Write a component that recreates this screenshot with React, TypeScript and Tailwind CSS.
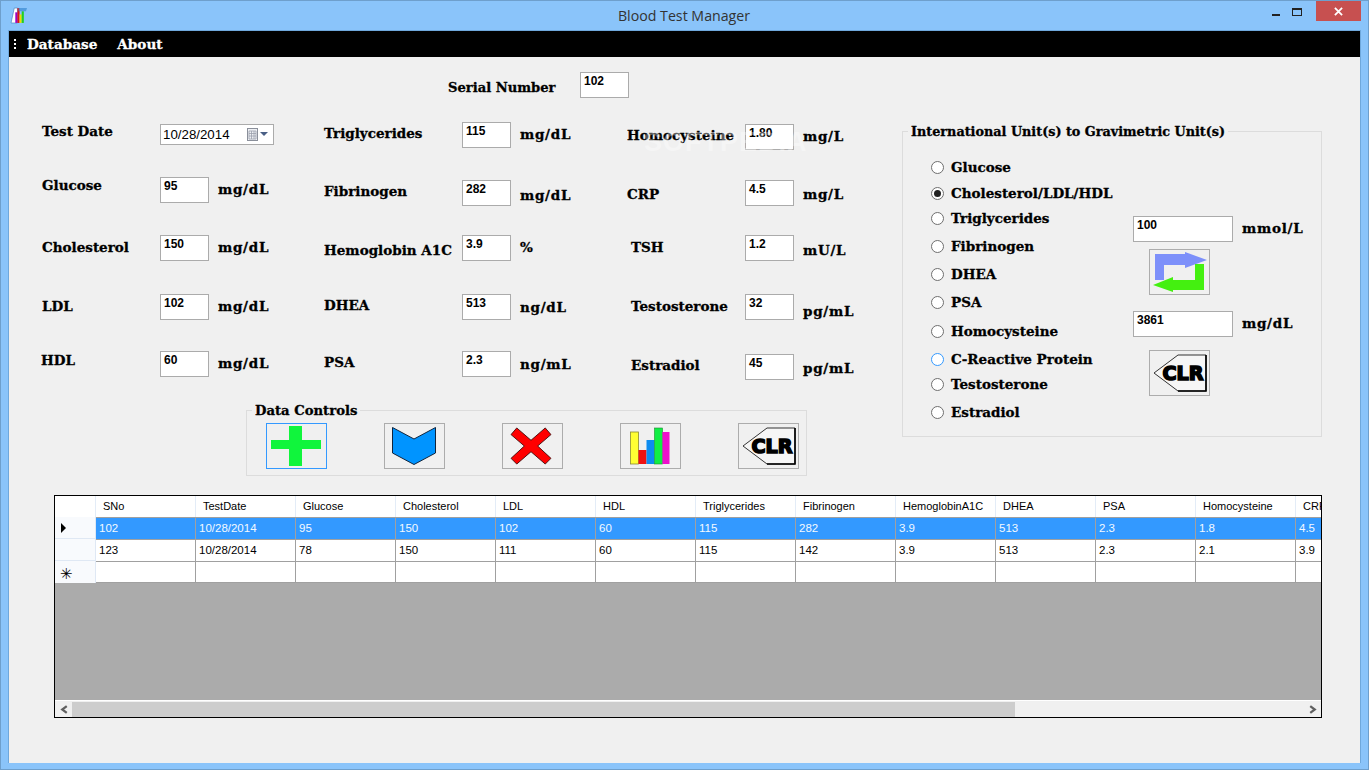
import { Fragment } from 'react'

const labelBase = "font-['DejaVu_Serif',serif] font-bold leading-[17px] text-black whitespace-nowrap [-webkit-text-stroke:0.3px_#000]"
const labelFont = `${labelBase} text-[13.5px]`
const unidadFont = "font-['DejaVu_Serif',serif] font-bold leading-4 text-black whitespace-nowrap [-webkit-text-stroke:0.3px_#000] text-[13.5px] tracking-[0.7px]"
const inputBox = "border border-[#ababab] bg-white font-['Liberation_Sans',sans-serif] font-semibold text-[12px] leading-4 text-black pl-[3px]"

type Campo = { label: string; valor: string; unidad?: string; fila: string; offLabel: string; offUnidad: string; labelX?: string }

const columna1: Campo[] = [
  { label: 'Glucose', valor: '95', unidad: 'mg/dL', fila: 'mt-[27px]', offLabel: 'mt-0', offUnidad: 'mt-[4px]' },
  { label: 'Cholesterol', valor: '150', unidad: 'mg/dL', fila: 'mt-[32px]', offLabel: 'mt-[4px]', offUnidad: 'mt-[4px]' },
  { label: 'LDL', valor: '102', unidad: 'mg/dL', fila: 'mt-[33px]', offLabel: 'mt-[4px]', offUnidad: 'mt-[4px]' },
  { label: 'HDL', valor: '60', unidad: 'mg/dL', fila: 'mt-[31px]', offLabel: 'mt-[1px]', offUnidad: 'mt-[4px]', labelX: '-ml-px' },
]

const columna2: Campo[] = [
  { label: 'Triglycerides', valor: '115', unidad: 'mg/dL', fila: 'mt-0', offLabel: 'mt-[3px]', offUnidad: 'mt-[4px]' },
  { label: 'Fibrinogen', valor: '282', unidad: 'mg/dL', fila: 'mt-[32px]', offLabel: 'mt-[3px]', offUnidad: 'mt-[7px]' },
  { label: 'Hemoglobin A1C', valor: '3.9', unidad: '%', fila: 'mt-[29px]', offLabel: 'mt-[7px]', offUnidad: 'mt-[4px]' },
  { label: 'DHEA', valor: '513', unidad: 'ng/dL', fila: 'mt-[33px]', offLabel: 'mt-[3px]', offUnidad: 'mt-[5px]' },
  { label: 'PSA', valor: '2.3', unidad: 'ng/mL', fila: 'mt-[31px]', offLabel: 'mt-[3px]', offUnidad: 'mt-[5px]' },
]

const columna3: Campo[] = [
  { label: 'Homocysteine', valor: '1.80', unidad: 'mg/L', fila: 'mt-[2px]', offLabel: 'mt-[3px]', offUnidad: 'mt-[4px]' },
  { label: 'CRP', valor: '4.5', unidad: 'mg/L', fila: 'mt-[30px]', offLabel: 'mt-[6px]', offUnidad: 'mt-[6px]' },
  { label: 'TSH', valor: '1.2', unidad: 'mU/L', fila: 'mt-[29px]', offLabel: 'mt-[4px]', offUnidad: 'mt-[7px]', labelX: 'ml-[4px]' },
  { label: 'Testosterone', valor: '32', unidad: 'pg/mL', fila: 'mt-[33px]', offLabel: 'mt-[4px]', offUnidad: 'mt-[9px]', labelX: 'ml-[4px]' },
  { label: 'Estradiol', valor: '45', unidad: 'pg/mL', fila: 'mt-[34px]', offLabel: 'mt-[3px]', offUnidad: 'mt-[6px]', labelX: 'ml-[4px]' },
]

const radios = [
  { t: 'Glucose', m: 'mt-0' },
  { t: 'Cholesterol/LDL/HDL', m: 'mt-[6px]', on: true },
  { t: 'Triglycerides', m: 'mt-[5px]' },
  { t: 'Fibrinogen', m: 'mt-[8px]' },
  { t: 'DHEA', m: 'mt-[8px]' },
  { t: 'PSA', m: 'mt-[8px]' },
  { t: 'Homocysteine', m: 'mt-[9px]' },
  { t: 'C-Reactive Protein', m: 'mt-[8px]', hover: true },
  { t: 'Testosterone', m: 'mt-[5px]' },
  { t: 'Estradiol', m: 'mt-[8px]' },
]

const columnasTabla = ['SNo', 'TestDate', 'Glucose', 'Cholesterol', 'LDL', 'HDL', 'Triglycerides', 'Fibrinogen', 'HemoglobinA1C', 'DHEA', 'PSA', 'Homocysteine', 'CRP']
const filasTabla = [
  ['102', '10/28/2014', '95', '150', '102', '60', '115', '282', '3.9', '513', '2.3', '1.8', '4.5'],
  ['123', '10/28/2014', '78', '150', '111', '60', '115', '142', '3.9', '513', '2.3', '2.1', '3.9'],
]

function Fila({ c, anchoLabel }: { c: Campo; anchoLabel: string }) {
  return (
    <div className={`flex items-start h-[26px] ${c.fila}`}>
      <div className={`${anchoLabel} shrink-0`}>
        <div className={`${labelFont} ${c.offLabel} ${c.labelX ?? ''}`}>{c.label}</div>
      </div>
      <div className={`${inputBox} w-[49px] h-[26px] shrink-0`}>{c.valor}</div>
      <div className={`${unidadFont} ml-[9px] ${c.offUnidad}`}>{c.unidad}</div>
    </div>
  )
}

function IconoClr() {
  return (
    <svg viewBox="0 0 54 38" className="w-[54px] h-[38px]">
      <path d="M25 1 H53 V37 H25 L1 19 Z" fill="#f6f6f6" stroke="#333" strokeWidth="1" />
      <path d="M53 1 V37 H25" fill="none" stroke="#000" strokeWidth="1.6" />
      <text x="30" y="26" textAnchor="middle" fontFamily="'DejaVu Sans', sans-serif" fontWeight="900" fontSize="19" stroke="#000" strokeWidth="1.6" fill="#000" textLength="41" lengthAdjust="spacingAndGlyphs">CLR</text>
    </svg>
  )
}

function Boton({ foco, children }: { foco?: boolean; children: React.ReactNode }) {
  return (
    <div className={`w-[61px] h-[46px] shrink-0 border bg-[#f0f0f0] flex items-center justify-center ${foco ? 'border-[#3399ff]' : 'border-[#acacac]'}`}>
      {children}
    </div>
  )
}

export default function App() {
  return (
    <div className="w-[1369px] h-[770px] bg-[#8ac4fa] border border-[#6e9fcc] flex flex-col overflow-hidden relative">
      {/* barra de titulo */}
      <div className="h-[29px] flex items-center shrink-0 relative">
        <svg viewBox="0 0 16 16" className="w-[17px] h-[17px] ml-[9px]">
          <path d="M4 1 L1 15 L7 15 L7 1 Z" fill="#fff" stroke="#2a6bb0" strokeWidth="0.5" />
          <rect x="5" y="5" width="2" height="10" fill="#a000c0" />
          <rect x="7" y="1" width="2" height="14" fill="#e01010" />
          <rect x="9" y="7" width="2" height="8" fill="#f0e000" />
          <rect x="11" y="4" width="2" height="11" fill="#20d020" />
          <path d="M8 1 H16 L15 4 H8 Z" fill="#3a8ad0" opacity="0.7" />
        </svg>
        <div className="flex-1 text-center font-['Open_Sans',sans-serif] text-[14.2px] text-[#333] ml-[88px]">Blood Test Manager</div>
        <div className="flex items-start h-full self-start mr-[7px]">
          <div className="w-[45px] h-[20px] flex items-center justify-center">
            <div className="w-[8px] h-[2px] bg-[#222] mt-[7px]" />
          </div>
          <div className="w-[25px] h-[20px] flex items-center justify-center -ml-[14px] mr-[7px]">
            <div className="w-[10px] h-[8px] border border-[#222] border-t-2 mt-[1px]" />
          </div>
          <div className="w-[45px] h-[20px] bg-[#c75050] flex items-center justify-center">
            <svg viewBox="0 0 10 10" className="w-[9px] h-[9px]">
              <path d="M1 1 L9 9 M9 1 L1 9" stroke="#fff" strokeWidth="2" />
            </svg>
          </div>
        </div>
      </div>

      {/* cuerpo de la ventana */}
      <div className="mx-[7px] h-[733px] flex flex-col bg-[#f0f0f0] border-t border-l border-r border-[#6fa8dc] relative">
        <div className="h-[26px] bg-black flex items-center shrink-0 font-['DejaVu_Serif',serif] font-bold text-[13.6px] text-white [-webkit-text-stroke:0.3px_#fff]">
          <div className="w-[3px] h-[10px] ml-[5px] border-l-2 border-dotted border-white" />
          <span className="ml-[10px]">Database</span>
          <span className="ml-[20px]">About</span>
        </div>

        <div className="flex h-[438px] shrink-0">
          {/* lado izquierdo */}
          <div className="w-[893px] shrink-0">
            <div className="flex items-start mt-[15px] ml-[439px]">
              <div className={`${labelBase} text-[13.1px] w-[132px] mt-[7px]`}>Serial Number</div>
              <div className={`${inputBox} w-[49px] h-[26px]`}>102</div>
            </div>

            <div className="flex mt-[24px] ml-[33px]">
              <div className="w-[282px] shrink-0">
                <div className="flex items-start h-[26px] mt-[2px]">
                  <div className="w-[118px] shrink-0">
                    <div className={`${labelFont} -mt-[1px]`}>Test Date</div>
                  </div>
                  <div className="w-[114px] h-[21px] border border-[#ababab] bg-white flex items-center justify-between pl-[2px] pr-[5px] font-['Liberation_Sans',sans-serif] text-[13.3px] leading-[17px] pb-[1px] text-black">
                    <span>10/28/2014</span>
                    <span className="flex items-center gap-[2px]">
                      <svg viewBox="0 0 11 13" className="w-[11px] h-[13px]">
                        <rect x="0.5" y="0.5" width="10" height="12" fill="#eef0f4" stroke="#8a8f9a" />
                        <path d="M2 3 H9 V11 H2 Z M4.5 3 V11 M7 3 V11 M2 5.5 H9 M2 8 H9" fill="none" stroke="#9aa0ac" strokeWidth="0.8" />
                      </svg>
                      <span className="w-0 h-0 border-l-[4px] border-r-[4px] border-t-[4px] border-l-transparent border-r-transparent border-t-[#4a5f85] block" />
                    </span>
                  </div>
                </div>
                {columna1.map((c) => (
                  <Fila key={c.label} c={c} anchoLabel="w-[118px]" />
                ))}
              </div>
              <div className="w-[303px] shrink-0">
                {columna2.map((c) => (
                  <Fila key={c.label} c={c} anchoLabel="w-[138px]" />
                ))}
              </div>
              <div className="w-[240px] shrink-0">
                {columna3.map((c) => (
                  <Fila key={c.label} c={c} anchoLabel="w-[118px]" />
                ))}
              </div>
            </div>

            {/* Data Controls */}
            <div className="relative ml-[237px] mt-[30px] w-[561px] h-[66px] border border-[#dcdcdc] flex gap-[57px] pl-[19px] pt-[12px]">
              <div className={`${labelBase} text-[13.2px] absolute -top-[9px] left-[5px] bg-[#f0f0f0] px-[3px]`}>Data Controls</div>
              <Boton foco>
                <svg viewBox="0 0 50 40" className="w-[50px] h-[40px] -ml-px">
                  <path d="M18 0 H31 V14 H50 V23 H31 V40 H18 V23 H0 V14 H18 Z" fill="#10f53c" />
                </svg>
              </Boton>
              <Boton>
                <svg viewBox="0 0 44 38" className="w-[44px] h-[38px] -ml-px">
                  <path d="M0.5 0.5 L22 12 L43.5 0.5 V26 L22 37.5 L0.5 26 Z" fill="#0094ff" stroke="#10243c" strokeWidth="1" />
                </svg>
              </Boton>
              <Boton>
                <svg viewBox="0 0 44 40" className="w-[42px] h-[38px] -ml-[3px]">
                  <path d="M7 1 L22 14 L37 1 L43 8 L29 20 L43 33 L37 39 L22 26 L7 39 L1 33 L15 20 L1 8 Z" fill="#ff0000" stroke="#4a1010" strokeWidth="1" />
                </svg>
              </Boton>
              <Boton>
                <svg viewBox="0 0 40 38" className="w-[40px] h-[38px] -ml-[2px]">
                  <rect x="0.5" y="5" width="8" height="32" fill="#ffff33" stroke="#8a8a30" strokeWidth="0.8" />
                  <rect x="8.5" y="23" width="8" height="14" fill="#ee1111" />
                  <rect x="16.5" y="13" width="8" height="24" fill="#0d8cf0" />
                  <rect x="24.5" y="1" width="8" height="36" fill="#11ee44" stroke="#1a8a30" strokeWidth="0.6" />
                  <rect x="32.5" y="5" width="7" height="32" fill="#ee11cc" />
                </svg>
              </Boton>
              <Boton>
                <IconoClr />
              </Boton>
            </div>
          </div>

          {/* conversor */}
          <div className="relative mt-[74px] w-[420px] h-[306px] border border-[#dcdcdc] flex">
            <div className={`${labelBase} text-[12.8px] absolute -top-[9px] left-[5px] bg-[#f0f0f0] px-[3px]`}>International Unit(s) to Gravimetric Unit(s)</div>
            <div className="w-[230px] shrink-0 pt-[25px] pl-[28px]">
              {radios.map((r) => (
                <div key={r.t} className={`flex items-center h-[20px] ${r.m}`}>
                  <span className={`w-[13px] h-[13px] rounded-full border bg-white flex items-center justify-center shrink-0 ${r.hover ? 'border-[#3399ff]' : 'border-[#6f6f6f]'}`}>
                    {r.on && <span className="w-[7px] h-[7px] rounded-full bg-[#222] block" />}
                  </span>
                  <span className={`${labelFont} ml-[7px]`}>{r.t}</span>
                </div>
              ))}
            </div>
            <div className="pt-[84px]">
              <div className="flex items-start">
                <div className={`${inputBox} w-[100px] h-[26px]`}>100</div>
                <div className={`${unidadFont} ml-[9px] mt-[4px]`}>mmol/L</div>
              </div>
              <div className="ml-[16px] mt-[7px]">
                <Boton>
                  <svg viewBox="0 0 54 40" className="w-[54px] h-[40px]">
                    <path d="M2 2 H32 V0 L54 8 L32 16 V13 H11 V28 H2 Z" fill="#7d90fa" />
                    <path d="M42 12 H51 V38 H20 V40 L0 33 L20 25 V28 H42 Z" fill="#44f010" />
                  </svg>
                </Boton>
              </div>
              <div className="flex items-start mt-[16px]">
                <div className={`${inputBox} w-[100px] h-[26px]`}>3861</div>
                <div className={`${unidadFont} ml-[9px] mt-[4px]`}>mg/dL</div>
              </div>
              <div className="ml-[16px] mt-[13px]">
                <Boton>
                  <IconoClr />
                </Boton>
              </div>
            </div>
          </div>
        </div>

        {/* tabla */}
        <div className="ml-[45px] w-[1268px] h-[223px] border border-black bg-[#ababab] flex flex-col overflow-hidden shrink-0 font-['Liberation_Sans',sans-serif] text-[11.5px] text-black">
          <div className="flex h-[21px] bg-white shrink-0 text-[11px]">
            <div className="w-[41px] shrink-0 border-r border-[#e3ecf7]" />
            {columnasTabla.map((c) => (
              <div key={c} className="w-[100px] shrink-0 pl-[7px] leading-[21px] border-r border-[#e3ecf7] whitespace-nowrap overflow-hidden">{c}</div>
            ))}
          </div>
          {filasTabla.map((fila, i) => (
            <div key={fila[0]} className="flex h-[22px] shrink-0">
              <div className={`w-[41px] shrink-0 bg-[#f8fafd] flex items-center border-r border-b border-[#dfe8f4] ${i === 0 ? 'border-[#b9cbe0]' : ''}`}>
                {i === 0 && <span className="ml-[6px] w-0 h-0 border-t-[5px] border-b-[5px] border-l-[5px] border-t-transparent border-b-transparent border-l-black block" />}
              </div>
              {fila.map((v, j) => (
                <div key={columnasTabla[j]} className={`w-[100px] shrink-0 pl-[3px] leading-[21px] border-r border-t border-[#a0a0a0] ${i === 0 ? 'bg-[#3399ff] text-[#f4f9ff]' : 'bg-white'}`}>{v}</div>
              ))}
            </div>
          ))}
          <div className="flex h-[22px] shrink-0">
            <div className="w-[41px] shrink-0 bg-[#f8fafd] border-r border-[#dfe8f4] flex items-center pl-[5px] text-[15px] leading-none pt-[3px]">✳</div>
            {columnasTabla.map((c) => (
              <Fragment key={c}>
                <div className="w-[100px] shrink-0 bg-white border-r border-t border-b border-[#a0a0a0]" />
              </Fragment>
            ))}
          </div>
          <div className="flex-1" />
          <div className="h-[17px] bg-[#f0f0f0] border-t border-white flex items-center shrink-0">
            <svg viewBox="0 0 8 8" className="w-[9px] h-[9px] ml-[5px] shrink-0">
              <path d="M6 1 L2 4 L6 7" fill="none" stroke="#606060" strokeWidth="2" />
            </svg>
            <div className="w-[943px] h-[15px] bg-[#cdcdcd] ml-[3px] shrink-0" />
            <div className="flex-1" />
            <svg viewBox="0 0 8 8" className="w-[9px] h-[9px] mr-[4px] shrink-0">
              <path d="M2 1 L6 4 L2 7" fill="none" stroke="#606060" strokeWidth="2" />
            </svg>
          </div>
        </div>
      </div>

      {/* marca de agua */}
      <div className="absolute left-[643px] top-[128px] font-['Liberation_Sans',sans-serif] font-bold text-[27px] leading-[27px] tracking-[1px] text-white/35 pointer-events-none">SOFTPEDIA</div>
    </div>
  )
}
